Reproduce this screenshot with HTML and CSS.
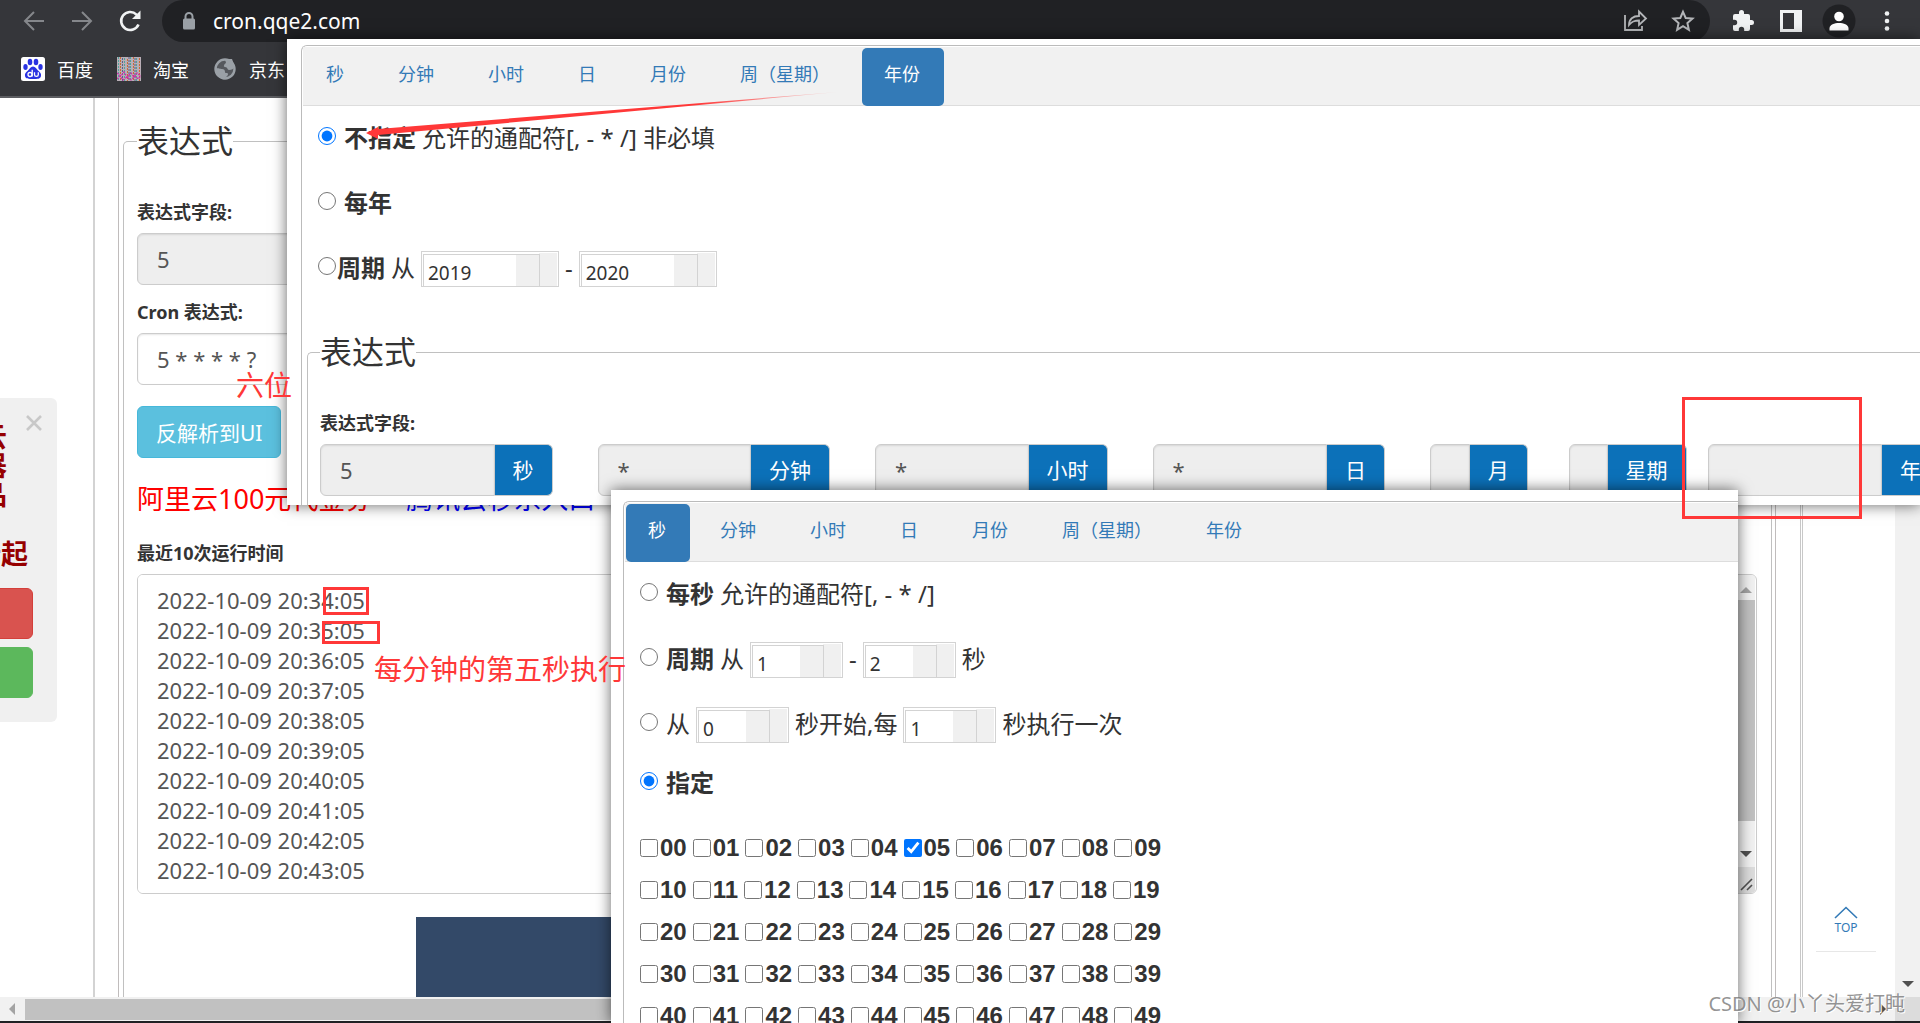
FILE: index.html
```html
<!DOCTYPE html>
<html lang="zh-CN">
<head>
<meta charset="utf-8">
<title>Cron 表达式</title>
<link rel="stylesheet" href="styles.css">
</head>
<body>
<header class="browser">
  <div class="toolbar">
    <nav class="nav-buttons">
      <button class="icon-btn" aria-label="后退"><svg width="24" height="24" viewBox="0 0 24 24" fill="none" stroke="#85878b" stroke-width="2"><path d="M22 12H3M12 3l-9 9 9 9"/></svg></button>
      <button class="icon-btn" aria-label="前进"><svg width="24" height="24" viewBox="0 0 24 24" fill="none" stroke="#85878b" stroke-width="2"><path d="M2 12h19M12 3l9 9-9 9"/></svg></button>
      <button class="icon-btn" aria-label="刷新"><svg width="24" height="24" viewBox="0 0 24 24" fill="none" stroke="#f1f3f4" stroke-width="2.6"><path d="M20.500 15.500A9 9 0 1 1 18.500 5.600L21 8"/><path d="M22.500 1.500V10H14z" fill="#f1f3f4" stroke="none"/></svg></button>
    </nav>
    <div class="omnibox">
      <svg width="14" height="18" viewBox="0 0 14 18"><path d="M3.500 8V4.500a3.500 3.500 0 0 1 7 0V8" fill="none" stroke="#9aa0a6" stroke-width="2"/><rect x="1" y="6.500" width="12" height="11" rx="1.500" fill="#9aa0a6"/></svg>
      <span class="url">cron.qqe2.com</span>
      <button class="icon-btn" aria-label="分享"><svg width="26" height="24" viewBox="0 0 26 24" fill="none" stroke="#b4b6b9" stroke-width="1.800"><path d="M3 6v15h17v-4"/><path d="M7 16c0-6 4-9 10-9V2.500L24 9.500 17 16v-4.500c-5 0-7 1-10 4.500z"/></svg></button>
      <button class="icon-btn" aria-label="收藏"><svg width="24" height="24" viewBox="0 0 24 24" fill="none" stroke="#b4b6b9" stroke-width="2"><path d="M12 2.800l2.700 6.200 6.800.6-5.100 4.500 1.500 6.700L12 17.200l-5.900 3.600 1.500-6.700L2.500 9.600l6.800-.6z"/></svg></button>
    </div>
    <div class="tools">
      <button class="icon-btn" aria-label="扩展程序"><svg width="24" height="24" viewBox="0 0 24 24" fill="#f1f3f4"><path d="M20.500 11H19V7a2 2 0 0 0-2-2h-4V3.500a2.500 2.500 0 0 0-5 0V5H4a2 2 0 0 0-2 2v3.800h1.500a2.700 2.700 0 0 1 0 5.400H2V20a2 2 0 0 0 2 2h3.800v-1.500a2.700 2.700 0 0 1 5.400 0V22H17a2 2 0 0 0 2-2v-4h1.500a2.500 2.500 0 0 0 0-5z"/></svg></button>
      <button class="icon-btn" aria-label="侧边栏"><svg width="22" height="22" viewBox="0 0 22 22"><path d="M0 0h22v22H0zM3 3v16h11V3z" fill="#f1f3f4" fill-rule="evenodd"/></svg></button>
      <button class="icon-btn" aria-label="用户"><svg width="34" height="34" viewBox="0 0 34 34"><circle cx="17" cy="17" r="16.500" fill="#202124"/><circle cx="17" cy="12.500" r="4.800" fill="#fff"/><path d="M7.500 26.500v-2c0-4 5-5.500 9.500-5.500s9.500 1.500 9.500 5.500v2z" fill="#fff"/></svg></button>
      <button class="icon-btn" aria-label="菜单"><svg width="6" height="22" viewBox="0 0 6 22" fill="#f1f3f4"><circle cx="3" cy="3.500" r="2.300"/><circle cx="3" cy="11" r="2.300"/><circle cx="3" cy="18.500" r="2.300"/></svg></button>
    </div>
  </div>
  <nav class="bookmarks">
    <a href="#"><svg width="24" height="24" viewBox="0 0 24 24"><rect width="24" height="24" rx="2.500" fill="#fff"/><g fill="#2932e1"><ellipse cx="9" cy="5" rx="2.300" ry="3.200"/><ellipse cx="15" cy="5" rx="2.300" ry="3.200"/><ellipse cx="4.500" cy="10" rx="2.200" ry="3"/><ellipse cx="19.500" cy="10" rx="2.200" ry="3"/><path d="M12 9.500c2.500 0 3.500 2.500 5 4 2 1.800 3.500 3 3 5.500-.6 3-3.500 3-8 3s-7.400 0-8-3c-.5-2.500 1-3.700 3-5.500 1.500-1.500 2.500-4 5-4z"/></g><g fill="none" stroke="#fff" stroke-width="1.300"><circle cx="9" cy="17.500" r="2"/><path d="M11.200 12.800v6.800M13.500 15.200v2.600c0 2.200 3.800 2.200 3.800 0v-2.600"/></g></svg>百度</a>
    <a href="#"><svg width="24" height="24" viewBox="0 0 24 24"><rect width="24" height="24" fill="#b9aeb6"/><g fill="none" stroke-width="1" stroke-dasharray="2 1"><path d="M1.500 0v24M7.500 1v23M13.500 0v24M19.500 1v23" stroke="#4fa39a"/><path d="M3.500 0v24M10.500 2v22M16.500 0v24M22.500 1v23" stroke="#c76a35"/><path d="M5.500 1v23M12 0v24M18 1v23" stroke="#5b5f88"/></g><path d="M0 16l4 3 3-4 3 5 4-4 3 4 3-4 4 3M0 22l3-3 3 4 4-3 4 3 4-4 3 3 3-3" fill="none" stroke="#d029a8" stroke-width="1.300" stroke-dasharray="2 1"/></svg>淘宝</a>
    <a href="#"><svg width="24" height="24" viewBox="0 0 24 24"><circle cx="12" cy="12" r="9.500" fill="#55585d" stroke="#9aa0a6" stroke-width="2.400"/><path d="M12 2h7l3 8c-2 2-3 3-6 3-2 0-1-3-4-3-2 0-1-3 1-4zM2 11c4 0 5 1 7 1s3 1 3 3 3 0 3 2-2 2-3 5c-4 1-10-4-10-11z" fill="#9aa0a6"/></svg>京东</a>
  </nav>
</header>

<div class="viewport">
  <main class="page">
    <div class="frame">
      <div class="sheet">
        <fieldset class="expr">
          <legend>表达式</legend>
          <div class="field"><label for="f-sec">表达式字段:</label><input class="control" id="f-sec" value="5" readonly></div>
          <div class="field"><label for="f-cron">Cron 表达式:</label><input class="control" id="f-cron" value="5 * * * * ?"></div>
          <button class="parse">反解析到UI</button>
          <p class="promo"><a class="red" href="#">阿里云100元代金券</a><a class="blue" href="#">腾讯云秒杀入口</a></p>
          <div class="field"><label for="f-runs">最近10次运行时间</label>
            <div class="runs">
              <textarea id="f-runs" rows="10">2022-10-09 20:34:05
2022-10-09 20:35:05
2022-10-09 20:36:05
2022-10-09 20:37:05
2022-10-09 20:38:05
2022-10-09 20:39:05
2022-10-09 20:40:05
2022-10-09 20:41:05
2022-10-09 20:42:05
2022-10-09 20:43:05</textarea>
              <div class="runs-scroll"><i class="tri up"></i><i class="thumb"></i><i class="tri down"></i><svg width="18" height="26" viewBox="0 0 18 26"><rect width="18" height="26" fill="#dcdcdc"/><path d="M4 23L15 12M10 23l5-5" stroke="#505050" stroke-width="1.600"/></svg></div>
            </div>
          </div>
          <div class="banner"></div>
        </fieldset>
      </div>
    </div>
  </main>
  <div class="vscroll"><i class="tri down"></i></div>
</div>
<div class="hscroll"><i class="tri left"></i><i class="bar"></i><i class="tri right"></i><i class="corner"></i></div>

<aside class="ad">
  <button class="ad-close" aria-label="关闭"><svg width="16" height="16" viewBox="0 0 16 16"><path d="M1 1l14 14M15 1L1 15" stroke="#c8c8c8" stroke-width="2.600"/></svg></button>
  <p class="ad-title">云<br>器<br>品</p>
  <p class="ad-price">折起</p>
  <button class="ad-btn danger" aria-label="阿里云"></button>
  <button class="ad-btn success" aria-label="腾讯云"></button>
</aside>

<a class="top-link" href="#"><svg width="24" height="14" viewBox="0 0 24 14"><path d="M1 12L12 1.500 23 12" fill="none" stroke="#337ab7" stroke-width="1.600"/></svg>TOP</a>

<section class="window year-window">
  <div class="tabbox">
    <ul class="tabs">
      <li><a href="#">秒</a></li><li><a href="#">分钟</a></li><li><a href="#">小时</a></li><li><a href="#">日</a></li><li><a href="#">月份</a></li><li><a href="#">周（星期）</a></li><li><a class="active" href="#">年份</a></li>
    </ul>
    <div class="options">
      <div class="option"><label><input type="radio" name="year" checked><b>不指定</b></label><span>允许的通配符[, - * /] 非必填</span></div>
      <div class="option"><label><input type="radio" name="year"><b>每年</b></label></div>
      <div class="option"><label class="tight"><input type="radio" name="year"><b>周期</b></label><span>从</span>
        <span class="spinner wide"><input aria-label="起始年" value="2019"><i></i></span><span>-</span>
        <span class="spinner wide"><input aria-label="结束年" value="2020"><i></i></span></div>
    </div>
    <fieldset class="expr fields">
      <legend>表达式</legend>
      <div class="field-title">表达式字段:</div>
      <div class="groups">
        <div class="group"><input class="control" id="g1" value="5" readonly><label for="g1">秒</label></div>
        <div class="group"><input class="control" id="g2" value="*" readonly><label for="g2">分钟</label></div>
        <div class="group"><input class="control" id="g3" value="*" readonly><label for="g3">小时</label></div>
        <div class="group"><input class="control" id="g4" value="*" readonly><label for="g4">日</label></div>
        <div class="group slim"><input class="control" id="g5" readonly><label for="g5">月</label></div>
        <div class="group slim last"><input class="control" id="g6" readonly><label for="g6">星期</label></div>
        <div class="group"><input class="control" id="g7" readonly><label for="g7">年</label></div>
      </div>
    </fieldset>
  </div>
</section>

<section class="window second-window">
  <div class="tabbox">
    <ul class="tabs">
      <li><a class="active" href="#">秒</a></li><li><a href="#">分钟</a></li><li><a href="#">小时</a></li><li><a href="#">日</a></li><li><a href="#">月份</a></li><li><a href="#">周（星期）</a></li><li><a href="#">年份</a></li>
    </ul>
    <div class="options">
      <div class="option"><label><input type="radio" name="sec"><b>每秒</b></label><span>允许的通配符[, - * /]</span></div>
      <div class="option"><label><input type="radio" name="sec"><b>周期</b></label><span>从</span>
        <span class="spinner"><input aria-label="起始秒" value="1"><i></i></span><span>-</span>
        <span class="spinner"><input aria-label="结束秒" value="2"><i></i></span><span>秒</span></div>
      <div class="option"><label><input type="radio" name="sec">从</label>
        <span class="spinner"><input aria-label="开始秒" value="0"><i></i></span><span>秒开始,每</span>
        <span class="spinner"><input aria-label="间隔秒" value="1"><i></i></span><span>秒执行一次</span></div>
      <div class="option compact"><label><input type="radio" name="sec" checked><b>指定</b></label></div>
    </div>
    <div class="checks">
      <div><label><input type="checkbox">00</label><label><input type="checkbox">01</label><label><input type="checkbox">02</label><label><input type="checkbox">03</label><label><input type="checkbox">04</label><label><input type="checkbox" checked>05</label><label><input type="checkbox">06</label><label><input type="checkbox">07</label><label><input type="checkbox">08</label><label><input type="checkbox">09</label></div>
      <div><label><input type="checkbox">10</label><label><input type="checkbox">11</label><label><input type="checkbox">12</label><label><input type="checkbox">13</label><label><input type="checkbox">14</label><label><input type="checkbox">15</label><label><input type="checkbox">16</label><label><input type="checkbox">17</label><label><input type="checkbox">18</label><label><input type="checkbox">19</label></div>
      <div><label><input type="checkbox">20</label><label><input type="checkbox">21</label><label><input type="checkbox">22</label><label><input type="checkbox">23</label><label><input type="checkbox">24</label><label><input type="checkbox">25</label><label><input type="checkbox">26</label><label><input type="checkbox">27</label><label><input type="checkbox">28</label><label><input type="checkbox">29</label></div>
      <div><label><input type="checkbox">30</label><label><input type="checkbox">31</label><label><input type="checkbox">32</label><label><input type="checkbox">33</label><label><input type="checkbox">34</label><label><input type="checkbox">35</label><label><input type="checkbox">36</label><label><input type="checkbox">37</label><label><input type="checkbox">38</label><label><input type="checkbox">39</label></div>
      <div><label><input type="checkbox">40</label><label><input type="checkbox">41</label><label><input type="checkbox">42</label><label><input type="checkbox">43</label><label><input type="checkbox">44</label><label><input type="checkbox">45</label><label><input type="checkbox">46</label><label><input type="checkbox">47</label><label><input type="checkbox">48</label><label><input type="checkbox">49</label></div>
    </div>
  </div>
</section>

<svg class="arrow" width="480" height="50" viewBox="0 0 480 50"><defs><linearGradient id="fade"><stop offset="0.700" stop-color="#ff3838"/><stop offset="1" stop-color="#ff3838" stop-opacity="0.100"/></linearGradient></defs><path d="M4 43L16 37v2L476 2 16 45v4z" fill="url(#fade)"/></svg>
<div class="mark mark-a"></div>
<div class="mark mark-b"></div>
<div class="mark mark-year"></div>
<span class="note note-six">六位</span>
<span class="note note-fifth">每分钟的第五秒执行</span>
<span class="watermark">CSDN @小丫头爱打盹</span>
</body>
</html>
```
FILE: styles.css
```css
* { box-sizing: border-box; }
body {
  margin: 0;
  height: 100vh;
  display: flex;
  flex-direction: column;
  position: relative;
  overflow: hidden;
  background: #fff;
  color: #333;
  font-family: "Noto Sans", "Noto Sans CJK SC", sans-serif;
  font-size: 24px;
}
p, ul { margin: 0; padding: 0; }
a { text-decoration: none; }
button, input, textarea { font: inherit; color: inherit; margin: 0; }
svg { display: block; flex: none; }
i { display: block; }

/* browser chrome */
.browser { background: #35363a; border-bottom: 2px solid #5c5d61; flex: none; }
.toolbar { display: flex; height: 42px; padding: 0 9px 0 10px; }
.nav-buttons, .tools { display: flex; align-items: center; }
.nav-buttons { margin-right: 8px; }
.tools { margin-left: 9px; }
.icon-btn {
  width: 48px;
  height: 40px;
  padding: 0;
  border: 0;
  background: none;
  display: flex;
  align-items: center;
  justify-content: center;
}
.omnibox {
  flex: 1;
  display: flex;
  align-items: center;
  padding: 0 3px 0 20px;
  background: #202124;
  border-radius: 21px;
  color: #fff;
  font-size: 21px;
}
.url { flex: 1; padding-left: 17px; }
.bookmarks { display: flex; gap: 24px; height: 54px; padding-left: 21px; align-items: center; }
.bookmarks a { display: flex; align-items: center; gap: 12px; color: #fff; font-size: 18px; }

/* page */
.viewport { flex: 1; min-height: 0; display: flex; }
.page { flex: 1; display: flex; padding: 0 92px 0 93px; overflow: hidden; }
.frame { flex: 1; padding: 0 24px 0 23px; border-left: 2px solid #d3d3d3; border-right: 3px double #c8c8c8; }
.sheet { padding: 21px 3px 0 4px; border: solid #c0bcbc; border-width: 0 1px; }
.expr { margin: 0; border: 1px solid #c0c0c0; border-bottom: 0; border-radius: 5px 5px 0 0; padding: 36px 14px 0 13px; min-width: 0; }
legend { padding: 0; font-size: 32px; line-height: 44px; }
.field { margin-bottom: 14px; }
.field label, .field-title { display: block; font-size: 18px; font-weight: 700; line-height: 26px; margin-bottom: 8px; }
.control {
  display: block;
  width: 100%;
  height: 52px;
  padding: 0 19px;
  border: 1px solid #ccc;
  border-radius: 6px;
  background: #fff;
  box-shadow: inset 0 1px 2px rgba(0, 0, 0, .1);
  color: #555;
  font-size: 22px;
}
.control:read-only { background: #eee; }
.parse {
  display: block;
  height: 52px;
  margin-top: 21px;
  padding: 0 18px;
  border: 1px solid #46b8da;
  border-radius: 6px;
  background: #5bc0de;
  color: #fff;
  font-size: 21px;
}
.promo { display: flex; gap: 34px; margin: 21px 0; font-size: 27px; line-height: 40px; }
.red { color: #f00; }
.blue { color: #00f; }
.runs { display: flex; border: 1px solid #ccc; border-radius: 6px; overflow: hidden; height: 320px; padding-right: 1px; }
.runs textarea { flex: 1; border: 0; padding: 10px 19px; resize: none; overflow: hidden; color: #555; font-size: 22px; line-height: 30px; }
.runs-scroll { width: 18px; background: #f1f1f1; display: flex; flex-direction: column; align-items: center; padding-top: 12px; }
.runs-scroll .thumb { width: 100%; flex: 1; margin: 7px 0 30px; background: #c1c1c1; }
.runs-scroll .down { margin-bottom: 10px; }
.banner { height: 400px; margin: 23px 279px 0; background: #334968; }

.tri { width: 0; height: 0; border: 6px solid transparent; flex: none; }
.tri.up { border-top: 0; border-bottom-color: #a3a3a3; }
.tri.down { border-bottom: 0; border-top-color: #505050; }
.tri.left { border-left: 0; border-right-color: #a3a3a3; }
.tri.right { border-right: 0; border-left-color: #505050; }
.vscroll { width: 25px; background: #f1f1f1; display: flex; justify-content: center; align-items: flex-end; padding-bottom: 10px; }
.hscroll { flex: none; height: 26px; display: flex; align-items: center; background: #f1f1f1; border-bottom: 2px solid #202124; padding-left: 9px; }
.hscroll .bar { width: 80%; height: 21px; margin: 0 auto 0 10px; background: #c1c1c1; }
.hscroll .corner { width: 25px; height: 24px; margin-left: 9px; background: #dcdcdc; }

/* floating pieces of the page */
.ad { position: absolute; left: -60px; top: 398px; width: 117px; height: 324px; border-radius: 6px; background: #f0f0f0; color: #960000; font-size: 27px; font-weight: 700; line-height: 29px; text-align: right; padding-top: 24px; }
.ad-close { position: absolute; right: 15px; top: 17px; padding: 0; border: 0; background: none; }
.ad-title { padding-right: 50px; }
.ad-price { padding: 30px 29px 20px 0; }
.ad-btn { display: block; width: 93px; height: 51px; margin-bottom: 8px; border: 1px solid #d43f3a; border-radius: 6px; background: #d9534f; }
.ad-btn.success { background: #5cb85c; border-color: #5cb85c; }
.top-link { position: absolute; right: 44px; top: 906px; width: 60px; height: 46px; display: flex; flex-direction: column; align-items: center; border-bottom: 1px solid #e7e7e7; color: #337ab7; font-size: 12px; line-height: 16px; }

/* windows */
.window { position: absolute; background: #fff; overflow: hidden; box-shadow: 0 0 14px rgba(0, 0, 0, .6); }
.year-window { left: 287px; right: 0; top: 39px; height: 466px; padding: 6px 0 0 14px; }
.second-window { left: 611px; right: 182px; top: 490px; bottom: 0; padding: 11px 0 0 12px; }
.tabbox { border: solid #bbb; border-width: 1px 0 0 1px; border-radius: 6px 0 0 0; padding: 1px 0 0 1px; height: 600px; }
.tabs { display: flex; gap: 10px; height: 59px; padding: 1px 0 0 1px; background: #f1f1f1; border-bottom: 1px solid #ddd; list-style: none; }
.tabs a { display: block; height: 58px; padding: 0 22px; border-radius: 5px; color: #337ab7; font-size: 18px; line-height: 52px; white-space: nowrap; }
.tabs .active { margin-right: -2px; padding-right: 24px; background: #337ab7; color: #fff; }
.options { display: flex; flex-direction: column; gap: 29px; padding: 14px 0 0 15px; }
.option { display: flex; align-items: center; gap: 6px; height: 36px; line-height: 36px; white-space: nowrap; }
.option.compact { height: 24px; }
.option label { display: flex; align-items: center; gap: 8px; }
.option .tight { gap: 1px; }
input[type="radio"], input[type="checkbox"] { width: 18px; height: 18px; flex: none; }
input[type="radio"] { margin-bottom: 4px; }
.spinner { display: flex; width: 93px; height: 36px; margin-top: 2px; padding: 2px 1px 0; border: 1px solid #d3d3d3; background: linear-gradient(#f0f0f0, #f0f0f0) right 1px top 1px / 18px 100% no-repeat; }
.spinner.wide { width: 138px; }
.spinner input { flex: 1; min-width: 0; padding: 5px 0 0 4px; border: solid #d3d3d3; border-width: 1px 0 0 1px; font-size: 19px; line-height: 24px; background: #fff; }
.spinner i { width: 24px; margin-right: 17px; border: solid #d3d3d3; border-width: 1px 1px 0 0; background: #f0f0f0; }
.fields { margin: 44px 0 0 4px; height: 300px; border-right: 0; border-radius: 5px 0 0 0; padding: 36px 0 0 12px; }
.groups { display: grid; grid-template-columns: 2fr 2fr 2fr 2fr 1fr 1fr 2fr; margin-right: -65px; }
.group { display: flex; padding-right: 45px; min-width: 0; }
.group.slim { padding-right: 41px; }
.group.last { padding-right: 21px; }
.group .control { flex: 1; min-width: 0; border-radius: 6px 0 0 6px; }
.group.slim .control { padding: 0; }
.group label { flex: none; padding: 0 18px; border: 1px solid #ccc; border-left: 0; border-radius: 0 6px 6px 0; background: #0c71b9; color: #fff; font-size: 21px; line-height: 50px; }
.checks { display: flex; flex-direction: column; gap: 16px; margin-top: 40px; padding-left: 15px; font: 700 24px/26px "Liberation Sans", sans-serif; }
.checks div { display: flex; gap: 6px; }
.checks label { display: flex; align-items: center; gap: 2px; }

/* annotations drawn over the windows */
.arrow { position: absolute; left: 362px; top: 90px; }
.mark { position: absolute; border: 3px solid #ff3838; }
.mark-a { left: 323px; top: 587px; width: 46px; height: 28px; }
.mark-b { left: 322px; top: 621px; width: 58px; height: 23px; }
.mark-year { left: 1682px; top: 397px; width: 180px; height: 122px; }
.note { position: absolute; color: #ff3838; font-size: 28px; line-height: 40px; white-space: nowrap; }
.note-six { left: 236px; top: 365px; }
.note-fifth { left: 374px; top: 649px; }
.watermark { position: absolute; right: 15px; bottom: 5px; color: rgba(120, 120, 120, .8); font-size: 20px; line-height: 28px; text-shadow: 1px 1px 0 #fff; }
```
